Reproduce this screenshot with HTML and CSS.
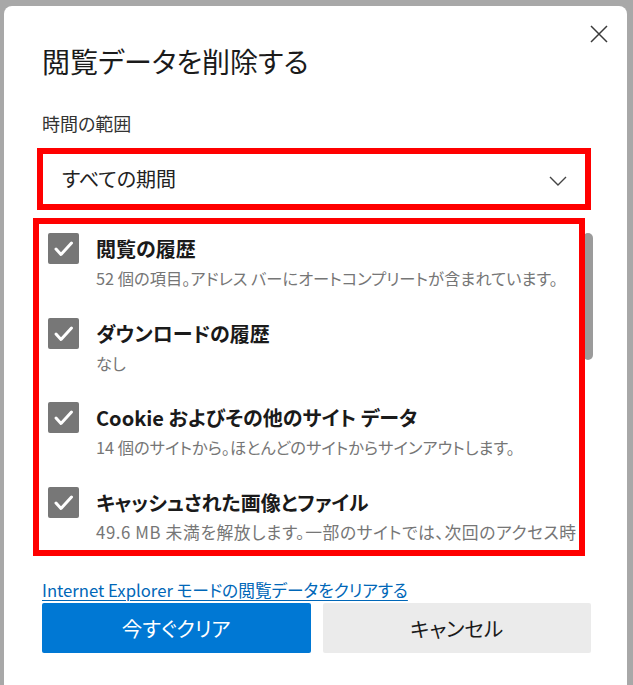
FILE: index.html
```html
<!DOCTYPE html>
<html lang="ja">
<head>
<meta charset="utf-8">
<title>閲覧データを削除する</title>
<link rel="stylesheet" href="styles.css">
</head>
<body>
<div class="backdrop">
  <div class="dialog">
    <div class="topbar">
      <button class="close" aria-label="閉じる">
        <svg width="18" height="18" viewBox="0 0 18 18"><path d="M1 1L17 17M17 1L1 17" stroke="#3a3a3a" stroke-width="1.5" fill="none"/></svg>
      </button>
    </div>
    <h1 class="title">閲覧データを削除する</h1>
    <div class="label">時間の範囲</div>
    <div class="select">
      <span class="select-text">すべての期間</span>
      <svg class="chev" width="18" height="10" viewBox="0 0 18 10"><path d="M1 1L9 9L17 1" stroke="#444" stroke-width="1.4" fill="none"/></svg>
    </div>
    <div class="list">
      <div class="items">
        <div class="item">
          <span class="box"><svg width="31" height="31" viewBox="0 0 31 31"><path d="M8 16L13 21.5L23.5 10" stroke="#fff" stroke-width="3" fill="none" stroke-linecap="round" stroke-linejoin="round"/></svg></span>
          <div class="text">
            <div class="item-title">閲覧の履歴</div>
            <div class="desc">52 個の項目。アドレス バーにオートコンプリートが含まれています。</div>
          </div>
        </div>
        <div class="item">
          <span class="box"><svg width="31" height="31" viewBox="0 0 31 31"><path d="M8 16L13 21.5L23.5 10" stroke="#fff" stroke-width="3" fill="none" stroke-linecap="round" stroke-linejoin="round"/></svg></span>
          <div class="text">
            <div class="item-title">ダウンロードの履歴</div>
            <div class="desc">なし</div>
          </div>
        </div>
        <div class="item">
          <span class="box"><svg width="31" height="31" viewBox="0 0 31 31"><path d="M8 16L13 21.5L23.5 10" stroke="#fff" stroke-width="3" fill="none" stroke-linecap="round" stroke-linejoin="round"/></svg></span>
          <div class="text">
            <div class="item-title">Cookie およびその他のサイト データ</div>
            <div class="desc">14 個のサイトから。ほとんどのサイトからサインアウトします。</div>
          </div>
        </div>
        <div class="item">
          <span class="box"><svg width="31" height="31" viewBox="0 0 31 31"><path d="M8 16L13 21.5L23.5 10" stroke="#fff" stroke-width="3" fill="none" stroke-linecap="round" stroke-linejoin="round"/></svg></span>
          <div class="text">
            <div class="item-title">キャッシュされた画像とファイル</div>
            <div class="desc wide">49.6 MB 未満を解放します。一部のサイトでは、次回のアクセス時</div>
          </div>
        </div>
      </div>
      <div class="track"><div class="thumb"></div></div>
      <div class="mark"></div>
    </div>
    <a class="link" href="#">Internet Explorer モードの閲覧データをクリアする</a>
    <div class="buttons">
      <button class="btn primary">今すぐクリア</button>
      <button class="btn secondary">キャンセル</button>
    </div>
  </div>
</div>
</body>
</html>
```

FILE: styles.css
```css
html, body {
  margin: 0;
  height: 100%;
}
body {
  background: #a8a8a8;
  font-family: "Noto Sans CJK JP", "Noto Sans", sans-serif;
  font-feature-settings: "palt";
  overflow: hidden;
}
.backdrop {
  height: 685px;
  box-sizing: border-box;
  padding: 6px 6px 0 4px;
}
.dialog {
  height: 100%;
  box-sizing: border-box;
  background: #fff;
  border-radius: 8px 8px 0 0;
  padding: 19px 19px 0 38px;
  display: flex;
  flex-direction: column;
}
.topbar {
  display: flex;
  justify-content: flex-end;
  height: 18px;
}
.close {
  width: 18px;
  height: 18px;
  padding: 0;
  border: 0;
  background: none;
  display: block;
}
.close svg { display: block; }
.title {
  margin: 0;
  font-size: 28px;
  line-height: 36px;
  font-weight: 400;
  color: #1b1b1b;
}
.label {
  margin-top: 32px;
  font-size: 18px;
  line-height: 24px;
  color: #333;
}
.select {
  margin-top: 18px;
  margin-right: 22px;
  height: 52px;
  box-sizing: border-box;
  border: 1px solid #cdcdcd;
  outline: 6px solid #ff0000;
  outline-offset: -1px;
  display: flex;
  align-items: center;
  justify-content: space-between;
  padding: 0 18px 0 19px;
}
.select-text {
  font-size: 20px;
  line-height: 26px;
  color: #222;
}
.chev { display: block; margin-top: 4px; }
.list {
  margin-top: 17px;
  margin-right: 12px;
  height: 334px;
  display: flex;
  position: relative;
}
.items {
  flex: 1;
  min-width: 0;
  overflow: hidden;
}
.item {
  height: 84.5px;
  box-sizing: border-box;
  padding: 11px 0 0 6px;
  display: flex;
  gap: 17px;
}
.box {
  flex: none;
  width: 31px;
  height: 31px;
  background: #777;
  border-radius: 2px;
}
.box svg { display: block; }
.text {
  padding-top: 3px;
  white-space: nowrap;
}
.item-title {
  font-size: 20px;
  line-height: 26px;
  font-weight: 700;
  color: #1a1a1a;
}
.desc {
  margin-top: 6px;
  font-size: 16.3px;
  line-height: 20px;
  color: #767676;
}
.desc.wide {
  font-size: 16.8px;
  letter-spacing: 0.6px;
}
.track {
  flex: none;
  width: 16px;
  display: flex;
  justify-content: center;
  padding-top: 11px;
}
.thumb {
  width: 10px;
  height: 127px;
  background: #9b9b9b;
  border-radius: 5px;
}
.mark {
  position: absolute;
  left: -9px;
  right: 11px;
  top: -4px;
  bottom: 0;
  border: 6px solid #ff0000;
  pointer-events: none;
}
.link {
  align-self: flex-start;
  margin-top: 23px;
  font-size: 16.7px;
  line-height: 22px;
  color: #0067b8;
  text-decoration: underline;
  text-underline-offset: 3px;
}
.buttons {
  margin-top: 2px;
  margin-right: 17px;
  display: flex;
  gap: 12px;
}
.btn {
  flex: 1;
  height: 50px;
  border: 0;
  border-radius: 2px;
  font-family: inherit;
  font-feature-settings: "palt";
  font-size: 20.5px;
}
.primary {
  background: #0078d4;
  color: #fff;
}
.secondary {
  background: #ebebeb;
  color: #1a1a1a;
}
```
